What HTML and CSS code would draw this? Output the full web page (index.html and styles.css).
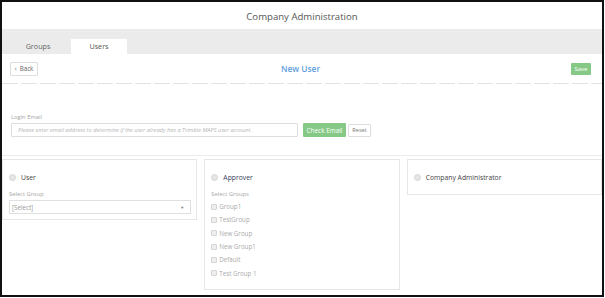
FILE: index.html
```html
<!DOCTYPE html>
<html lang="en">
<head>
  <meta charset="UTF-8">
  <title>Company Administration</title>
  <link rel="stylesheet" href="styles.css">
</head>
<body>

  <div class="frame">
    <div class="app-header">Company Administration</div>

    <div class="tabs">
      <div class="tab">Groups</div>
      <div class="tab active">Users</div>
    </div>

    <div class="toolbar">
      <div><button class="btn-back">&lsaquo;&nbsp; Back</button></div>
      <div class="page-title">New User</div>
      <div class="toolbar-right"><button class="btn-green btn-save">Save</button></div>
    </div>
    <div class="divider"></div>

    <div class="email-section">
      <label class="small-label" for="email">Login Email</label>
      <div class="email-row">
        <input type="text" id="email" placeholder="Please enter email address to determine if the user already has a Trimble MAPS user account.">
        <button class="btn-green btn-check">Check Email</button>
        <button class="btn-reset">Reset</button>
      </div>
    </div>

    <div class="roles">
      <div class="card">
        <div class="role"><span class="radio"></span>User</div>
        <div class="small-label">Select Group</div>
        <div class="select">[Select]<span class="arrow">&#9660;</span></div>
      </div>

      <div class="card card-tall">
        <div class="role role-blue"><span class="radio"></span>Approver</div>
        <div class="small-label">Select Groups</div>
        <div class="check"><span class="box"></span>Group1</div>
        <div class="check"><span class="box"></span>TestGroup</div>
        <div class="check"><span class="box"></span>New Group</div>
        <div class="check"><span class="box"></span>New Group1</div>
        <div class="check"><span class="box"></span>Default</div>
        <div class="check"><span class="box"></span>Test Group 1</div>
      </div>

      <div class="card card-short">
        <div class="role"><span class="radio"></span>Company Administrator</div>
      </div>
    </div>
  </div>

</body>
</html>
```

FILE: styles.css
```css
body {
  margin: 0;
  font-family: "Open Sans", Arial, sans-serif;
  background: #fff;
}

.frame {
  width: 604px;
  height: 297px;
  border: 2px solid #111;
  box-sizing: border-box;
  overflow: hidden;
  background: #fff;
}

.app-header {
  height: 27px;
  line-height: 29px;
  text-align: center;
  font-size: 9.6px;
  color: #555;
}

.tabs {
  height: 25px;
  background: #ebebeb;
  display: flex;
  align-items: flex-end;
  padding-left: 8px;
  box-sizing: border-box;
}

.tab {
  width: 56px;
  height: 15px;
  line-height: 15px;
  text-align: center;
  font-size: 7.2px;
  color: #666;
}

.tab.active {
  background: #fff;
  margin-left: 5px;
  color: #555;
}

.toolbar {
  height: 29px;
  display: grid;
  grid-template-columns: 1fr auto 1fr;
  align-items: center;
  padding: 0 11px 0 8px;
}

.toolbar > div {
  display: flex;
}

.toolbar-right {
  justify-content: flex-end;
}

button {
  font-family: "Open Sans", Arial, sans-serif;
  cursor: pointer;
}

.btn-back {
  height: 14px;
  width: 28px;
  padding: 0;
  background: #fff;
  border: 1px solid #ddd;
  border-radius: 1px;
  font-size: 6.2px;
  color: #666;
}

.page-title {
  font-size: 8.4px;
  font-weight: 600;
  color: #62a0e0;
}

.btn-green {
  background: #86c986;
  border: none;
  border-radius: 1px;
  color: #fff;
  padding: 0;
}

.btn-save {
  width: 20px;
  height: 12px;
  font-size: 6px;
}

.divider {
  height: 1px;
  background: repeating-linear-gradient(to right, #e2e2e2 0 16px, transparent 16px 19px);
}

.email-section {
  padding: 29px 0 18px 9px;
}

.small-label {
  display: block;
  font-size: 5.8px;
  line-height: 8px;
  color: #a5a5a5;
}

.email-row {
  display: flex;
  align-items: center;
  margin-top: 2px;
}

.email-row input {
  width: 287px;
  height: 14px;
  box-sizing: border-box;
  border: 1px solid #ddd;
  border-radius: 1px;
  padding: 0 6px;
  font-family: "Open Sans", Arial, sans-serif;
  font-size: 5.7px;
}

.email-row input::placeholder {
  color: #b5b5b5;
  font-style: italic;
}

.btn-check {
  width: 43px;
  height: 14px;
  margin-left: 5px;
  font-size: 6.4px;
}

.btn-reset {
  width: 23px;
  height: 13px;
  margin-left: 2px;
  padding: 0;
  background: #fff;
  border: 1px solid #ddd;
  border-radius: 1px;
  font-size: 5.6px;
  color: #777;
}

.roles {
  border-top: 1px solid #ececec;
  padding-top: 3px;
  display: grid;
  grid-template-columns: 1fr 1fr 1fr;
  gap: 7px;
  align-items: start;
}

.card {
  border: 1px solid #e6e6e6;
  padding: 12.5px 5px 5px 6px;
}

.card-tall {
  padding-bottom: 9px;
}

.card-tall .small-label {
  margin-bottom: 2px;
}

.card-short {
  padding-bottom: 12px;
}

.role {
  display: flex;
  align-items: center;
  height: 9px;
  font-size: 6.8px;
  color: #444;
  margin-bottom: 8.5px;
}

.role-blue {
  color: #34405a;
}

.card-short .role {
  margin-bottom: 0;
}

.radio {
  width: 7px;
  height: 7px;
  border-radius: 50%;
  background: #e6e6e6;
  border: 1px solid #d6d6d6;
  box-sizing: border-box;
  margin-right: 5px;
}

.select {
  margin-top: 2px;
  height: 14px;
  border: 1px solid #e0e0e0;
  box-sizing: border-box;
  display: flex;
  align-items: center;
  justify-content: space-between;
  padding: 0 6px 0 2px;
  font-size: 6.2px;
  color: #999;
}

.arrow {
  font-size: 4px;
  color: #777;
}

.check {
  display: flex;
  align-items: center;
  height: 13.3px;
  font-size: 6.2px;
  color: #aaa;
}

.box {
  width: 6px;
  height: 6px;
  border: 1px solid #d4d4d4;
  background: #eee;
  border-radius: 1px;
  box-sizing: border-box;
  margin-right: 2px;
}
```
